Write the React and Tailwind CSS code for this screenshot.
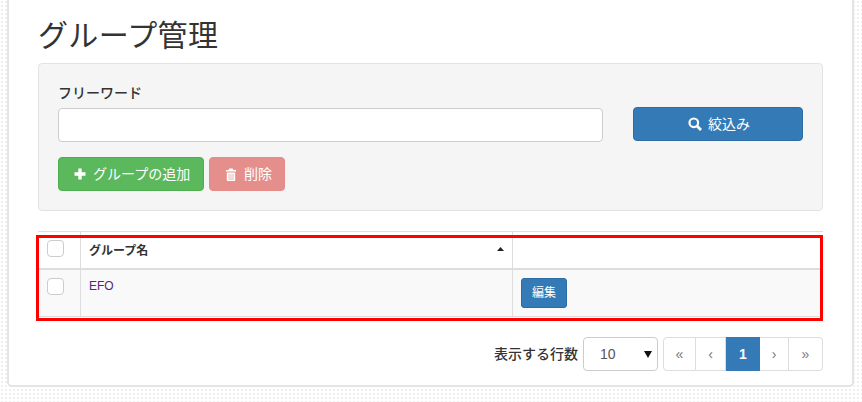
function Plus() {
  return (
    <svg width="12" height="12" viewBox="0 0 12 12" className="shrink-0" fill="#fff">
      <path d="M4.3 0.5h3.4v3.8h3.8v3.4H7.7v3.8H4.3V7.7H0.5V4.3h3.8z" />
    </svg>
  );
}
function Trash() {
  return (
    <svg width="12" height="13" viewBox="0 0 12 13" className="shrink-0" fill="#fff">
      <path d="M4.3 0.5h3.4l.6 1.5H11v1.6H1V2h2.7z" />
      <path fillRule="evenodd" d="M1.8 4.4h8.4V12a1 1 0 0 1-1 1H2.8a1 1 0 0 1-1-1zM3.6 6v5.4h4.8V6z" />
      <path d="M3.6 6h4.8v5.4H3.6z" fill="#f6dcdb" />
    </svg>
  );
}
function Search() {
  return (
    <svg width="14" height="14" viewBox="0 0 14 14" className="shrink-0" fill="none" stroke="#fff">
      <circle cx="5.8" cy="5.8" r="4.3" strokeWidth="2.2" />
      <path d="M9 9l4 4" strokeWidth="2.8" />
    </svg>
  );
}
function Check() {
  return <div className="w-[17px] h-[17px] bg-white border border-[#ccc] rounded-[4px]" />;
}
function PageCell({ children, className = "" }) {
  return (
    <div className={`h-full flex items-center justify-center border-y border-r border-[#ddd] bg-white text-[#777] ${className}`}>
      {children}
    </div>
  );
}
export default function App() {
  return (
    <div className="h-[402px] w-[862px] overflow-hidden bg-white bg-[image:radial-gradient(circle_at_center,#efefef_0.8px,transparent_1px)] bg-[size:4px_4px] pl-[7px] font-['Liberation_Sans','Noto_Sans_CJK_JP',sans-serif] text-[#333]">
      <div className="w-[847px] h-[387px] bg-white border-x-2 border-b-2 border-[#e4e4e4] rounded-b-[5px] pl-[29px] pr-[29px]">
        <h1 className="h-[63px] pt-[16px] text-[30px] leading-[40px] font-normal tracking-[0.35px] text-[#333]">グループ管理</h1>

        <div className="h-[148px] bg-[#f5f5f5] border border-[#e3e3e3] rounded-[4px] pl-[19px] pt-[18px]">
          <div className="flex">
            <div className="w-[545px]">
              <div className="h-[26px] text-[14px] leading-[22px] font-medium">フリーワード</div>
              <input className="block w-full h-[34px] bg-white border border-[#ccc] rounded-[4px]" />
            </div>
            <button className="ml-[30px] mt-[25px] w-[170px] h-[34px] flex items-center justify-start pl-[54px] gap-[6px] bg-[#337ab7] border border-[#2e6da4] rounded-[4px] text-white text-[14px]">
              <Search />
              絞込み
            </button>
          </div>
          <div className="flex gap-[5px] mt-[15px]">
            <button className="w-[146px] h-[34px] flex items-center justify-start pl-[15px] gap-[7px] bg-[#5cb85c] border border-[#4cae4c] rounded-[4px] text-white text-[14px]">
              <Plus />
              グループの追加
            </button>
            <button className="w-[76px] h-[34px] flex items-center justify-start pl-[15px] gap-[7px] bg-[#e48f8c] border border-[#e68a87] rounded-[4px] text-white text-[14px]">
              <Trash />
              削除
            </button>
          </div>
        </div>

        <div className="relative mt-[20px] h-[86px] border-y border-[#ddd] text-[12px]">
          <div className="flex h-[38px] border-b-2 border-[#ddd] bg-white">
            <div className="w-[43px] shrink-0 border-r border-[#ddd] pl-[9px] pt-[8px]"><Check /></div>
            <div className="w-[432px] shrink-0 border-r border-[#ddd] pl-[8px] pr-[8px] pt-[2px] flex items-center justify-between font-bold">
              <span>グループ名</span>
              <svg width="7" height="4" viewBox="0 0 7 4" fill="#222" className="mb-[4px]"><path d="M3.5 0l3.5 4H0z" /></svg>
            </div>
            <div className="flex-1" />
          </div>
          <div className="flex h-[46px] bg-[#f9f9f9]">
            <div className="w-[43px] shrink-0 border-r border-[#ddd] pl-[9px] pt-[8px]"><Check /></div>
            <div className="w-[432px] shrink-0 border-r border-[#ddd] pl-[8px] pt-[8px] leading-[17px] text-[#4f2a7a]">EFO</div>
            <div className="flex-1 pl-[8px] pt-[8px]">
              <button className="w-[46px] h-[30px] bg-[#337ab7] border border-[#2e6da4] rounded-[3px] text-white text-[12px]">編集</button>
            </div>
          </div>
          <div className="absolute -left-[2px] top-[3px] w-[787px] h-[86px] border-[3px] border-[#ff0000] pointer-events-none" />
        </div>

        <div className="flex items-center justify-end h-[34px] mt-[20px] text-[14px]">
          <span className="mr-[5px] font-medium">表示する行数</span>
          <div className="relative w-[75px] h-[34px] bg-white border border-[#ccc] rounded-[4px] pl-[16px] flex items-center text-[#555]">
            10
            <svg width="8" height="7" viewBox="0 0 8 7" fill="#111" className="absolute right-[5px] top-[13px]"><path d="M0 0h8L4 7z" /></svg>
          </div>
          <div className="flex h-[34px] ml-[5px]">
            <PageCell className="w-[33px] border-l rounded-l-[4px]">«</PageCell>
            <PageCell className="w-[30px]">‹</PageCell>
            <div className="w-[34px] h-full flex items-center justify-center bg-[#337ab7] text-white font-bold">1</div>
            <PageCell className="w-[29px]">›</PageCell>
            <PageCell className="w-[34px] rounded-r-[4px]">»</PageCell>
          </div>
        </div>
      </div>
    </div>
  );
}
